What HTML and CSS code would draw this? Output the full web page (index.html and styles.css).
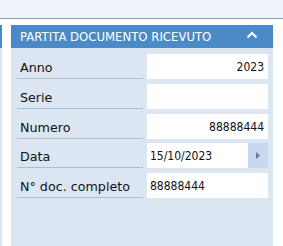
FILE: index.html
```html
<!DOCTYPE html>
<html lang="it">
<head>
  <meta charset="UTF-8" />
  <title>Partita documento ricevuto</title>
  <link rel="stylesheet" href="styles.css">
</head>
<body>
  <div class="topbar"></div>

  <div class="workspace">
    <div class="stub">
      <div class="stubHead"></div>
    </div>

    <div class="panel">
      <div class="panelHead">
        <span class="panelTitle">PARTITA DOCUMENTO RICEVUTO</span>
        <svg class="collapse" width="12" height="8" viewBox="0 0 12 8">
          <polyline points="1.5,6.5 6,2 10.5,6.5" fill="none" stroke="#fff" stroke-width="2" />
        </svg>
      </div>

      <div class="panelBody">
        <div class="row">
          <div class="label">Anno</div>
          <div class="field right">2023</div>
        </div>
        <div class="row">
          <div class="label">Serie</div>
          <div class="field"></div>
        </div>
        <div class="row">
          <div class="label">Numero</div>
          <div class="field right">88888444</div>
        </div>
        <div class="row">
          <div class="label">Data</div>
          <div class="field date">
            <span class="dateValue">15/10/2023</span>
            <span class="dateBtn">
              <svg width="5" height="7" viewBox="0 0 5 7"><polygon points="0,0 4,3.5 0,7" fill="#6d7c90" /></svg>
            </span>
          </div>
        </div>
        <div class="row">
          <div class="label">N° doc. completo</div>
          <div class="field">88888444</div>
        </div>
      </div>
    </div>
  </div>
</body>
</html>
```

FILE: styles.css
```css
body {
  margin: 0;
  background: #fff;
  font-family: "DejaVu Sans", Tahoma, sans-serif;
  color: #111;
  overflow: hidden;
}

.topbar {
  height: 18px;
  background: #eef2f9;
  border-bottom: 1px solid #8c9bb2;
}

.workspace {
  display: flex;
  gap: 9px;
  margin-top: 6px;
  height: 230px;
}

.stub {
  width: 2px;
  background: #dce6f2;
}

.stubHead {
  height: 23px;
  background: #4a8ac6;
}

.panel {
  width: 262px;
  display: flex;
  flex-direction: column;
  background: #dce6f2;
}

/* blue title bar */
.panelHead {
  height: 23px;
  background: #4a8ac6;
  color: #fff;
  display: flex;
  align-items: center;
  justify-content: space-between;
  padding: 0 15px 0 9px;
}

.panelTitle {
  font-size: 11.7px;
}

.collapse {
  margin-top: -3px;
}

.panelBody {
  padding: 6px 5px 0 6px;
  display: flex;
  flex-direction: column;
  gap: 4.75px;
}

.row {
  display: flex;
  gap: 4px;
  height: 25px;
}

.label {
  width: 126px;
  padding: 3px 0 0 3px;
  font-size: 12.7px;
  line-height: 22px;
  border-bottom: 1px solid #a6bedb;
  box-sizing: border-box;
  white-space: nowrap;
}

.field {
  width: 121px;
  background: #fff;
  font-family: "DejaVu Sans Condensed", "DejaVu Sans", sans-serif;
  font-size: 12px;
  line-height: 26px;
  padding: 0 4px 0 3px;
  box-sizing: border-box;
}

.right {
  text-align: right;
}

.date {
  display: flex;
  padding-right: 0;
}

.dateValue {
  flex: 1;
}

.dateBtn {
  width: 20px;
  height: 25px;
  background: #c6d9f0;
  display: flex;
  align-items: center;
  justify-content: center;
}
```
